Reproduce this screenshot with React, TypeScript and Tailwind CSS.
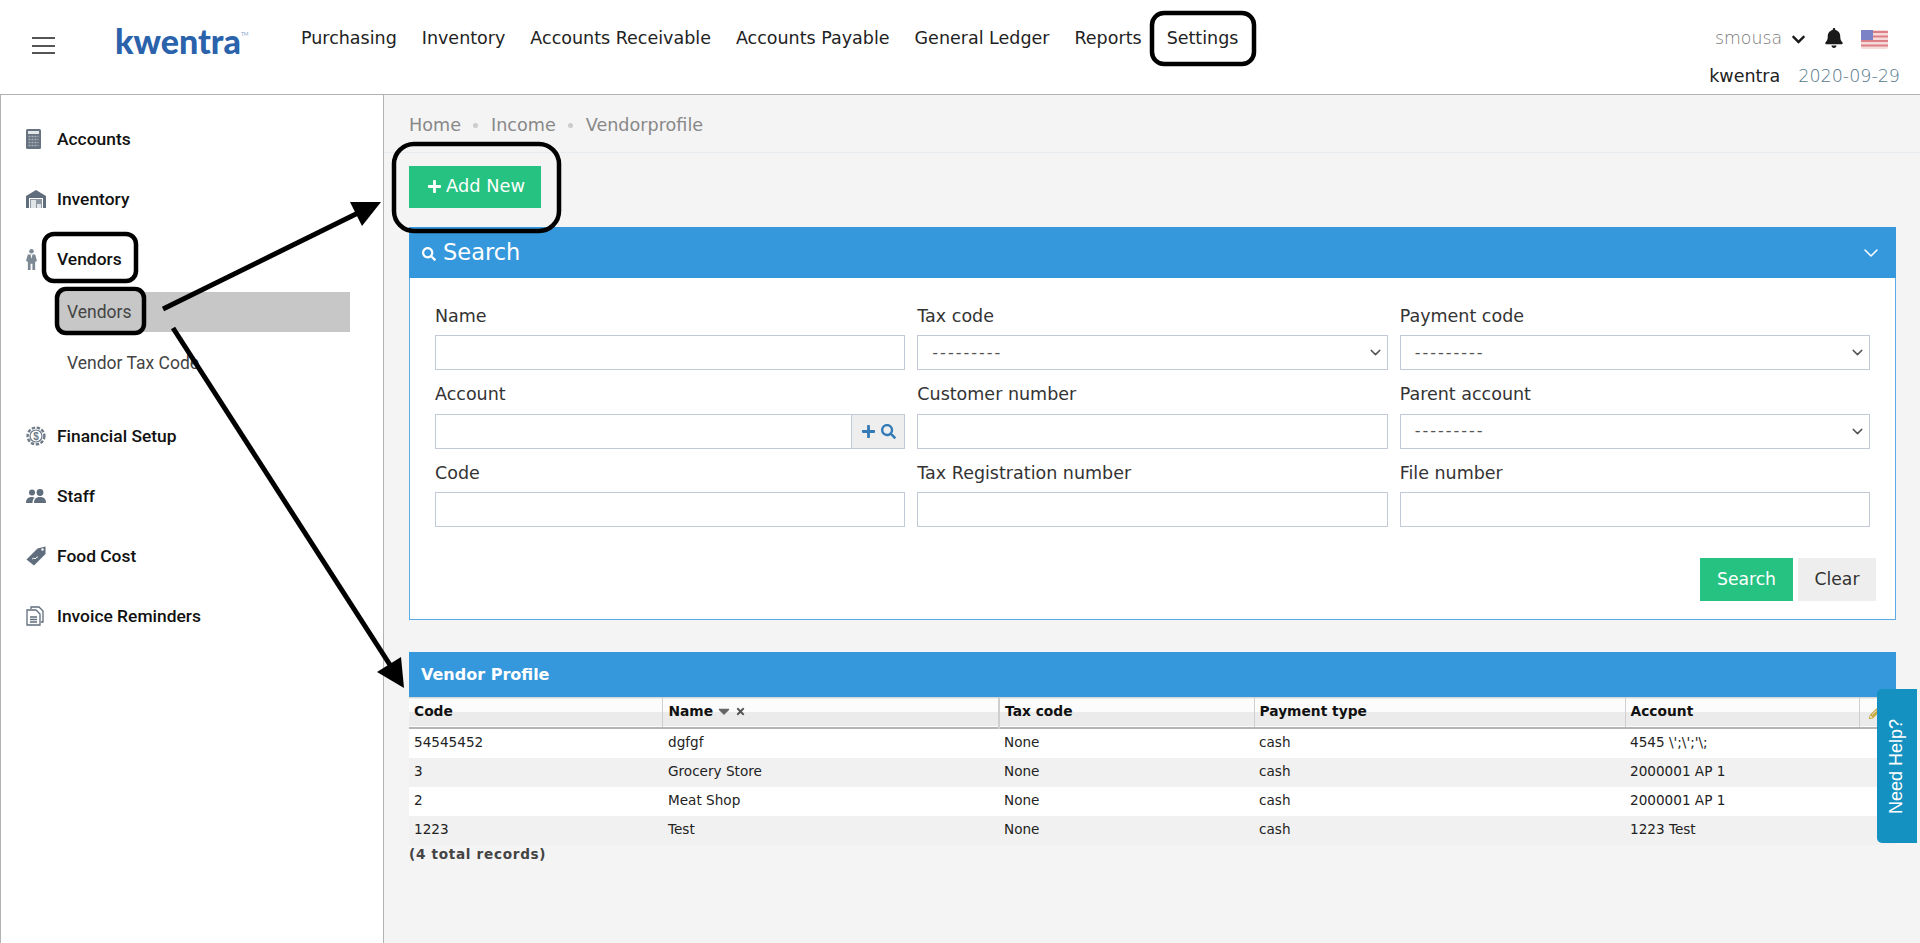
import React from 'react';
import { FaBell, FaChevronDown, FaPlus, FaSearch, FaTimes, FaCaretDown, FaPencilAlt } from 'react-icons/fa';
import { ChevronDown } from 'lucide-react';

const navItems = ['Purchasing', 'Inventory', 'Accounts Receivable', 'Accounts Payable', 'General Ledger', 'Reports', 'Settings'];

const rows = [
  ['54545452', 'dgfgf', 'None', 'cash', "4545 \\';\\';'\\;"],
  ['3', 'Grocery Store', 'None', 'cash', '2000001 AP 1'],
  ['2', 'Meat Shop', 'None', 'cash', '2000001 AP 1'],
  ['1223', 'Test', 'None', 'cash', '1223 Test'],
];

const CalculatorIcon = () => (
  <svg width="15" height="20" viewBox="0 0 15 20">
    <rect width="15" height="20" rx="1.500" fill="#66727f" />
    <rect x="2" y="2" width="11" height="3" fill="#e4e7ea" />
    <path d="M2.500 7.500h10M2.500 10.500h10M2.500 13.500h10M2.500 16.500h10" stroke="#aab2ba" strokeWidth="1.600" strokeDasharray="2 1" />
  </svg>
);

const WarehouseIcon = () => (
  <svg width="20" height="18" viewBox="0 0 20 18" fill="#5f6d7c">
    <path d="M0 18V6l10-6 10 6v12h-3V8H3v10z" />
    <path d="M4 9h12v9H4z" fill="#8d98a4" />
    <path d="M5 10h5v8H5zM11 14h4v4h-4z" fill="#fff" opacity="0.75" />
  </svg>
);

const PersonIcon = () => (
  <svg width="11" height="23" viewBox="0 0 12 23" fill="#7c8894">
    <circle cx="6" cy="2.500" r="2.500" />
    <path d="M2 6h8l2 7-2 1v9H7v-7H5v7H2v-9l-2-1z" />
    <path d="M5 6h2l-1 5z" fill="#fff" />
  </svg>
);

const GearIcon = () => (
  <svg width="20" height="20" viewBox="0 0 20 20" fill="none" stroke="#6d7a88">
    <circle cx="10" cy="10" r="8.400" strokeWidth="2.400" strokeDasharray="3.400 1.600" />
    <circle cx="10" cy="10" r="6" strokeWidth="1.200" fill="#fff" />
    <text x="10" y="13.500" fontSize="10" fontWeight="700" textAnchor="middle" fill="#6d7a88" stroke="none" fontFamily="Liberation Sans, sans-serif">$</text>
  </svg>
);

const StaffIcon = () => (
  <svg width="20" height="14" viewBox="0 0 20 14" fill="#5f6d7c">
    <circle cx="6" cy="3.500" r="3" />
    <circle cx="14" cy="3.500" r="3.400" />
    <path d="M0 14c0-4 2-6 6-6 1 0 2 .2 2.500.6C7 10 6.500 12 6.500 14zM8 14c0-4 2-6 6-6s6 2 6 6z" />
  </svg>
);

const TagIcon = () => (
  <svg width="20" height="20" viewBox="0 0 20 20">
    <path d="M0.500 13.500L11.500 2.500L19.500 0.500L19.500 8L8 19.500Z" fill="#5f6d7c" />
    <circle cx="16.500" cy="3.500" r="1.200" fill="#fff" />
    <path d="M6 13l2-1 1 1 2-2 1 0" stroke="#fff" strokeWidth="0.900" fill="none" />
  </svg>
);

const FilesIcon = () => (
  <svg width="18" height="20" viewBox="0 0 18 20" fill="none" stroke="#5f6d7c" strokeWidth="1.300">
    <path d="M5 3V1h8l4 4v11h-2" />
    <path d="M1 4h9l4 4v11H1z" fill="#fff" />
    <path d="M4 11h7M4 13.500h7M4 16h7" strokeWidth="1.500" />
  </svg>
);

const FlagIcon = () => (
  <svg width="27" height="19" viewBox="0 0 27 19">
    <rect width="27" height="19" rx="2" fill="#f6dada" />
    <path d="M0 2h27M0 6.500h27M0 11h27M0 15.500h27" stroke="#dc7f86" strokeWidth="2" />
    <rect width="12" height="10" fill="#7b83c6" />
  </svg>
);

const sideTop = [
  { label: 'Accounts', icon: <CalculatorIcon /> },
  { label: 'Inventory', icon: <WarehouseIcon /> },
];

const sideBottom = [
  { label: 'Financial Setup', icon: <GearIcon /> },
  { label: 'Staff', icon: <StaffIcon /> },
  { label: 'Food Cost', icon: <TagIcon /> },
  { label: 'Invoice Reminders', icon: <FilesIcon /> },
];

const SideItem = ({ label, icon }: { label: string; icon: React.ReactNode }) => (
  <div className="h-[60px] flex items-center">
    <div className="w-[31px] flex justify-start">{icon}</div>
    <span className="text-[17.400px] font-medium text-[#111]">{label}</span>
  </div>
);

const Field = ({ label, select, addon }: { label: string; select?: boolean; addon?: boolean }) => (
  <div className="flex flex-col">
    <label className="h-[43.500px] pb-[6px] flex items-end text-[17.500px] text-[#333]">{label}</label>
    <div className="h-[35px] border border-[#c2cad8] bg-white flex items-center justify-between">
      {select && (
        <>
          <span className="pl-[14px] text-[16px] tracking-[2px] text-[#555]">---------</span>
          <ChevronDown size={17} color="#555" className="mr-[3px]" />
        </>
      )}
      {addon && (
        <div className="ml-auto w-[53px] h-full border-l border-[#c2cad8] bg-[#eeeeee] flex items-center justify-center gap-[5px] text-[#337ab7]">
          <FaPlus size={15} />
          <FaSearch size={15} />
        </div>
      )}
    </div>
  </div>
);

export default function App() {
  return (
    <div className="relative h-[943px] overflow-hidden bg-white font-['DejaVu_Sans',sans-serif]">
      {/* Top bar */}
      <header className="h-[95px] border-b border-[#b3b3b3] flex bg-white">
        <div className="w-[115px] pl-[32px] pt-[37px] shrink-0">
          <div className="w-[23px] h-[17px] flex flex-col justify-between">
            <div className="h-[2px] bg-[#555]" />
            <div className="h-[2px] bg-[#555]" />
            <div className="h-[2px] bg-[#555]" />
          </div>
        </div>
        <div className="w-[186px] shrink-0 pt-[20px] flex items-start font-['Lato',sans-serif]">
          <span className="text-[34px] leading-[42px] font-black text-[#2a62ab]">kwentra</span>
          <span className="text-[5px] mt-[11px] text-[#8aa7cc]">TM</span>
        </div>
        <nav className="flex gap-[25px] pt-[26px] h-fit text-[17.500px] leading-[24px] text-[#222]">
          {navItems.map(item => (
            <span key={item}>{item}</span>
          ))}
        </nav>
        <div className="ml-auto pr-[20px] pt-[27px] flex flex-col items-end">
          <div className="flex items-center h-[24px]">
            <span className="text-[17.300px] font-extralight text-[#777]">smousa</span>
            <FaChevronDown size={15} color="#1a1a1a" className="ml-[9px]" />
            <FaBell size={20} color="#1a1a1a" className="ml-[18px] mb-[3px]" />
            <div className="ml-[17px] mr-[12px]"><FlagIcon /></div>
          </div>
          <div className="flex items-center h-[24px] mt-[13px] text-[17.500px]">
            <span className="text-[#222]">kwentra</span>
            <span className="ml-[18px] font-extralight text-[#55788a]">2020-09-29</span>
          </div>
        </div>
      </header>

      <div className="flex h-[848px]">
        {/* Sidebar */}
        <aside className="w-[384px] shrink-0 bg-white border-l border-r border-[#b3b3b3] pl-[25px] pt-[14px] font-['Roboto',sans-serif]">
          {sideTop.map(item => <SideItem key={item.label} {...item} />)}
          <SideItem label="Vendors" icon={<PersonIcon />} />
          <div className="ml-[31px] mt-[3px] h-[40px] w-[293px] bg-[#c7c7c7] flex items-center pl-[10px] text-[17.500px] text-[#444]">
            Vendors
          </div>
          <div className="ml-[41px] mt-[19px] text-[17.500px] leading-[24px] text-[#444]">Vendor Tax Code</div>
          <div className="mt-[31px]">
            {sideBottom.map(item => <SideItem key={item.label} {...item} />)}
          </div>
        </aside>

        {/* Content */}
        <main className="flex-1 bg-[#f4f4f4] overflow-hidden">
          <div className="h-[58px] border-b border-[#e7ecf1] pl-[25px] pt-[3px] flex items-center gap-[12.500px] text-[17.600px] text-[#888]">
            <span>Home</span>
            <span className="w-[5px] h-[5px] rounded-full bg-[#ccc]" />
            <span>Income</span>
            <span className="w-[5px] h-[5px] rounded-full bg-[#ccc]" />
            <span>Vendorprofile</span>
          </div>

          <div className="pl-[25px] pr-[24px]">
            <button className="mt-[13px] w-[132px] h-[42px] pb-[2px] pl-[2px] bg-[#26c281] text-white text-[17.800px] flex items-center justify-center gap-[4px]">
              <FaPlus size={15} />
              Add New
            </button>

            {/* Search panel */}
            <section className="mt-[19px] border border-[#5aabe6] bg-white h-[393px]">
              <div className="h-[51px] -mx-px -mt-px bg-[#3598dc] flex items-center pl-[13px] pr-[13px] text-white">
                <FaSearch size={14} className="mt-[3px]" />
                <span className="ml-[7px] text-[22.500px]">Search</span>
                <ChevronDown size={24} strokeWidth={1.500} className="ml-auto" />
              </div>
              <div className="ml-[25px] mr-[25px] grid grid-cols-3 gap-x-[12px] -mt-[1px] pt-[14.500px]">
                <Field label="Name" />
                <Field label="Tax code" select />
                <Field label="Payment code" select />
                <Field label="Account" addon />
                <Field label="Customer number" />
                <Field label="Parent account" select />
                <Field label="Code" />
                <Field label="Tax Registration number" />
                <Field label="File number" />
              </div>
              <div className="mt-[31px] pr-[19px] flex justify-end gap-[5px] text-[17.200px]">
                <button className="w-[93px] h-[43px] bg-[#26c281] text-white">Search</button>
                <button className="w-[78px] h-[43px] bg-[#eeeeee] text-[#333]">Clear</button>
              </div>
            </section>

            {/* Vendor table */}
            <section className="mt-[32px]">
              <div className="h-[45px] pt-[1px] bg-[#3598dc] flex items-center pl-[12px] text-white text-[16px] font-bold">Vendor Profile</div>
              <table className="w-full table-fixed border-collapse text-[13.600px] text-[#222]">
                <colgroup>
                  <col className="w-[253px]" />
                  <col className="w-[337px]" />
                  <col className="w-[255px]" />
                  <col className="w-[371px]" />
                  <col className="w-[234px]" />
                  <col />
                </colgroup>
                <thead>
                  <tr className="h-[30px] border-b-2 border-t border-[#b5b5b5] border-t-[#d8d8d8] bg-[linear-gradient(#fcfcfc_50%,#ebebeb_50%)] text-left text-[13.800px] text-[#111]">
                    <th className="pl-[5px] pb-[2px] border-r border-[#cfcfcf]">Code</th>
                    <th className="pl-[6px] pb-[2px] border-r-2 border-[#cfcfcf]">
                      <span className="inline-flex items-center gap-[2px]">
                        Name
                        <FaCaretDown size={18} color="#666" />
                        <FaTimes size={11} color="#555" />
                      </span>
                    </th>
                    <th className="pl-[5px] pb-[2px] border-r border-[#cfcfcf]">Tax code</th>
                    <th className="pl-[5px] pb-[2px] border-r border-[#cfcfcf]">Payment type</th>
                    <th className="pl-[5px] pb-[2px] border-r border-[#cfcfcf]">Account</th>
                    <th className="pl-[9px]"><FaPencilAlt size={13} color="#c9a83c" /></th>
                  </tr>
                </thead>
                <tbody>
                  {rows.map((row, i) => (
                    <tr key={row[0]} className={`${i === 0 ? 'h-[30px]' : 'h-[29px]'} ${i % 2 === 0 ? 'bg-white' : 'bg-[#f1f1f1]'}`}>
                      {row.map((cell, j) => (
                        <td key={j} className={`${j === 1 ? 'pl-[6px]' : 'pl-[5px]'} pb-[1px] whitespace-nowrap`}>{cell}</td>
                      ))}
                      <td />
                    </tr>
                  ))}
                </tbody>
              </table>
              <div className="text-[13.600px] leading-[18px] font-semibold text-[#444] tracking-[0.700px]">(4 total records)</div>
            </section>
          </div>
        </main>
      </div>

      {/* Need help tab */}
      <div className="absolute left-[1877px] top-[689px] w-[40px] h-[154px] bg-[#1591c1] rounded-l-[5px] flex items-center justify-center">
        <span className="-rotate-90 whitespace-nowrap text-white text-[18px] font-['Liberation_Sans',sans-serif]">Need Help?</span>
      </div>

      {/* Hand drawn annotations */}
      <svg className="absolute inset-0 pointer-events-none" width="1920" height="943" fill="none" stroke="#000">
        <rect x="1152" y="13" width="102" height="51" rx="12" strokeWidth="4.500" />
        <rect x="394" y="144" width="165" height="87" rx="20" strokeWidth="4.500" />
        <rect x="44" y="234" width="92" height="47" rx="10" strokeWidth="4.500" />
        <rect x="57" y="289" width="87" height="44" rx="9" strokeWidth="4.500" />
        <path d="M163 309L358 213" strokeWidth="5" />
        <path d="M381 202L350 202L362 226Z" fill="#000" stroke="none" />
        <path d="M173 328L392 668" strokeWidth="5" />
        <path d="M404 688L377 672L401 657Z" fill="#000" stroke="none" />
      </svg>
    </div>
  );
}
